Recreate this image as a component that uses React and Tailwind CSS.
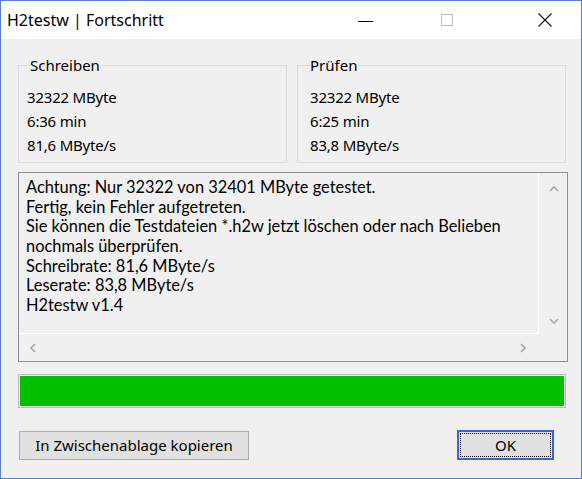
import React from "react";

const sans = { fontFamily: '"Noto Sans", "Open Sans", sans-serif' };
const memoFont = { fontFamily: 'Lato, "Noto Sans", sans-serif' };

function Chevron({ dir }) {
  const paths = {
    up: "M1 6 L5 2 L9 6",
    down: "M1 2 L5 6 L9 2",
    left: "M6 1 L2 5 L6 9",
    right: "M2 1 L6 5 L2 9",
  };
  const vertical = dir === "up" || dir === "down";
  return (
    <svg width={vertical ? 10 : 8} height={vertical ? 8 : 10} viewBox={vertical ? "0 0 10 8" : "0 0 8 10"}>
      <path d={paths[dir]} fill="none" stroke="#a6a6a6" strokeWidth="1.6" />
    </svg>
  );
}

function Group({ title, lines, labelPad, contentPad }) {
  return (
    <fieldset className="border border-[#dcdcdc] w-[269px] h-[107px] m-0 p-0 min-w-0">
      <legend className={`${labelPad} text-[15px] leading-[18px] text-[#000]`}>
        <span className="bg-[#f0f0f0] pr-[2px]">{title}</span>
      </legend>
      <div className={`flex flex-col ${contentPad} pt-[11px] text-[15px] leading-[24px] tracking-[-0.2px] text-[#000]`}>
        {lines.map((l) => (
          <div key={l}>{l}</div>
        ))}
      </div>
    </fieldset>
  );
}

export default function App() {
  const memo = [
    "Achtung: Nur 32322 von 32401 MByte getestet.",
    "Fertig, kein Fehler aufgetreten.",
    "Sie können die Testdateien *.h2w jetzt löschen oder nach Belieben",
    "nochmals überprüfen.",
    "Schreibrate: 81,6 MByte/s",
    "Leserate: 83,8 MByte/s",
    "H2testw v1.4",
  ];
  return (
    <div className="w-[582px] h-[479px] border border-[#5a7fd0] bg-[#f0f0f0] flex flex-col overflow-hidden" style={sans}>
      {/* Title bar */}
      <div className="h-[38px] bg-white flex items-center shrink-0">
        <div className="pl-[6px] text-[16px] text-[#000]">H2testw | Fortschritt</div>
        <div className="flex-1" />
        <div className="w-[15px] h-[1px] bg-[#000] mt-[2px]" />
        <div className="ml-[68px] w-[12px] h-[12px] border border-[#bdbdbd]" />
        <div className="ml-[85px] w-[14px] h-[14px]">
          <svg width="14" height="14" viewBox="0 0 14 14">
            <path d="M0.5 0.5 L13.5 13.5 M13.5 0.5 L0.5 13.5" stroke="#111" strokeWidth="1.1" />
          </svg>
        </div>
        <div className="w-[29px]" />
      </div>

      {/* Client */}
      <div className="flex flex-col pl-[17px] pr-[14px]">
        <div className="flex gap-[10px] mt-[17px]">
          <Group
            title="Schreiben"
            labelPad="ml-[11px]"
            contentPad="pl-[8px]"
            lines={["32322 MByte", "6:36 min", "81,6 MByte/s"]}
          />
          <Group
            title="Prüfen"
            labelPad="ml-[12px]"
            contentPad="pl-[12px]"
            lines={["32322 MByte", "6:25 min", "83,8 MByte/s"]}
          />
        </div>

        {/* Memo */}
        <div className="mt-[9px] w-[550px] h-[190px] border border-[#8f8f8f] flex flex-col">
          <div className="flex flex-1 min-h-0">
            <div
              className="flex-1 pl-[7px] pt-[4px] text-[16.4px] leading-[19.67px] text-[#000] border-r border-b border-white"
              style={memoFont}
            >
              {memo.map((l) => (
                <div key={l} className="whitespace-nowrap">{l}</div>
              ))}
            </div>
            <div className="w-[28px] flex flex-col items-center justify-between pt-[12px] pb-[9px] pl-[2px]">
              <Chevron dir="up" />
              <Chevron dir="down" />
            </div>
          </div>
          <div className="h-[27px] flex shrink-0">
            <div className="flex-1 flex items-center justify-between pl-[10px] pr-[12px]">
              <Chevron dir="left" />
              <Chevron dir="right" />
            </div>
            <div className="w-[28px]" />
          </div>
        </div>

        {/* Progress */}
        <div className="mt-[12px] w-[548px] h-[34px] border border-[#bcbcbc] p-[1px]">
          <div className="w-full h-full bg-[#00c000]" />
        </div>

        {/* Buttons */}
        <div className="flex mt-[22px] items-center">
          <div className="ml-[1px] w-[230px] h-[29px] border border-[#adadad] bg-[#e1e1e1] flex items-center justify-center text-[15px] text-[#000]">
            In Zwischenablage kopieren
          </div>
          <div className="flex-1" />
          <div className="mr-[13px] w-[97px] h-[30px] border-2 border-[#3c64d8] bg-[#e1e1e1] p-[1px]">
            <div className="w-full h-full border border-dotted border-[#000] flex items-center justify-center text-[15px] text-[#000]">
              OK
            </div>
          </div>
        </div>
      </div>
    </div>
  );
}
